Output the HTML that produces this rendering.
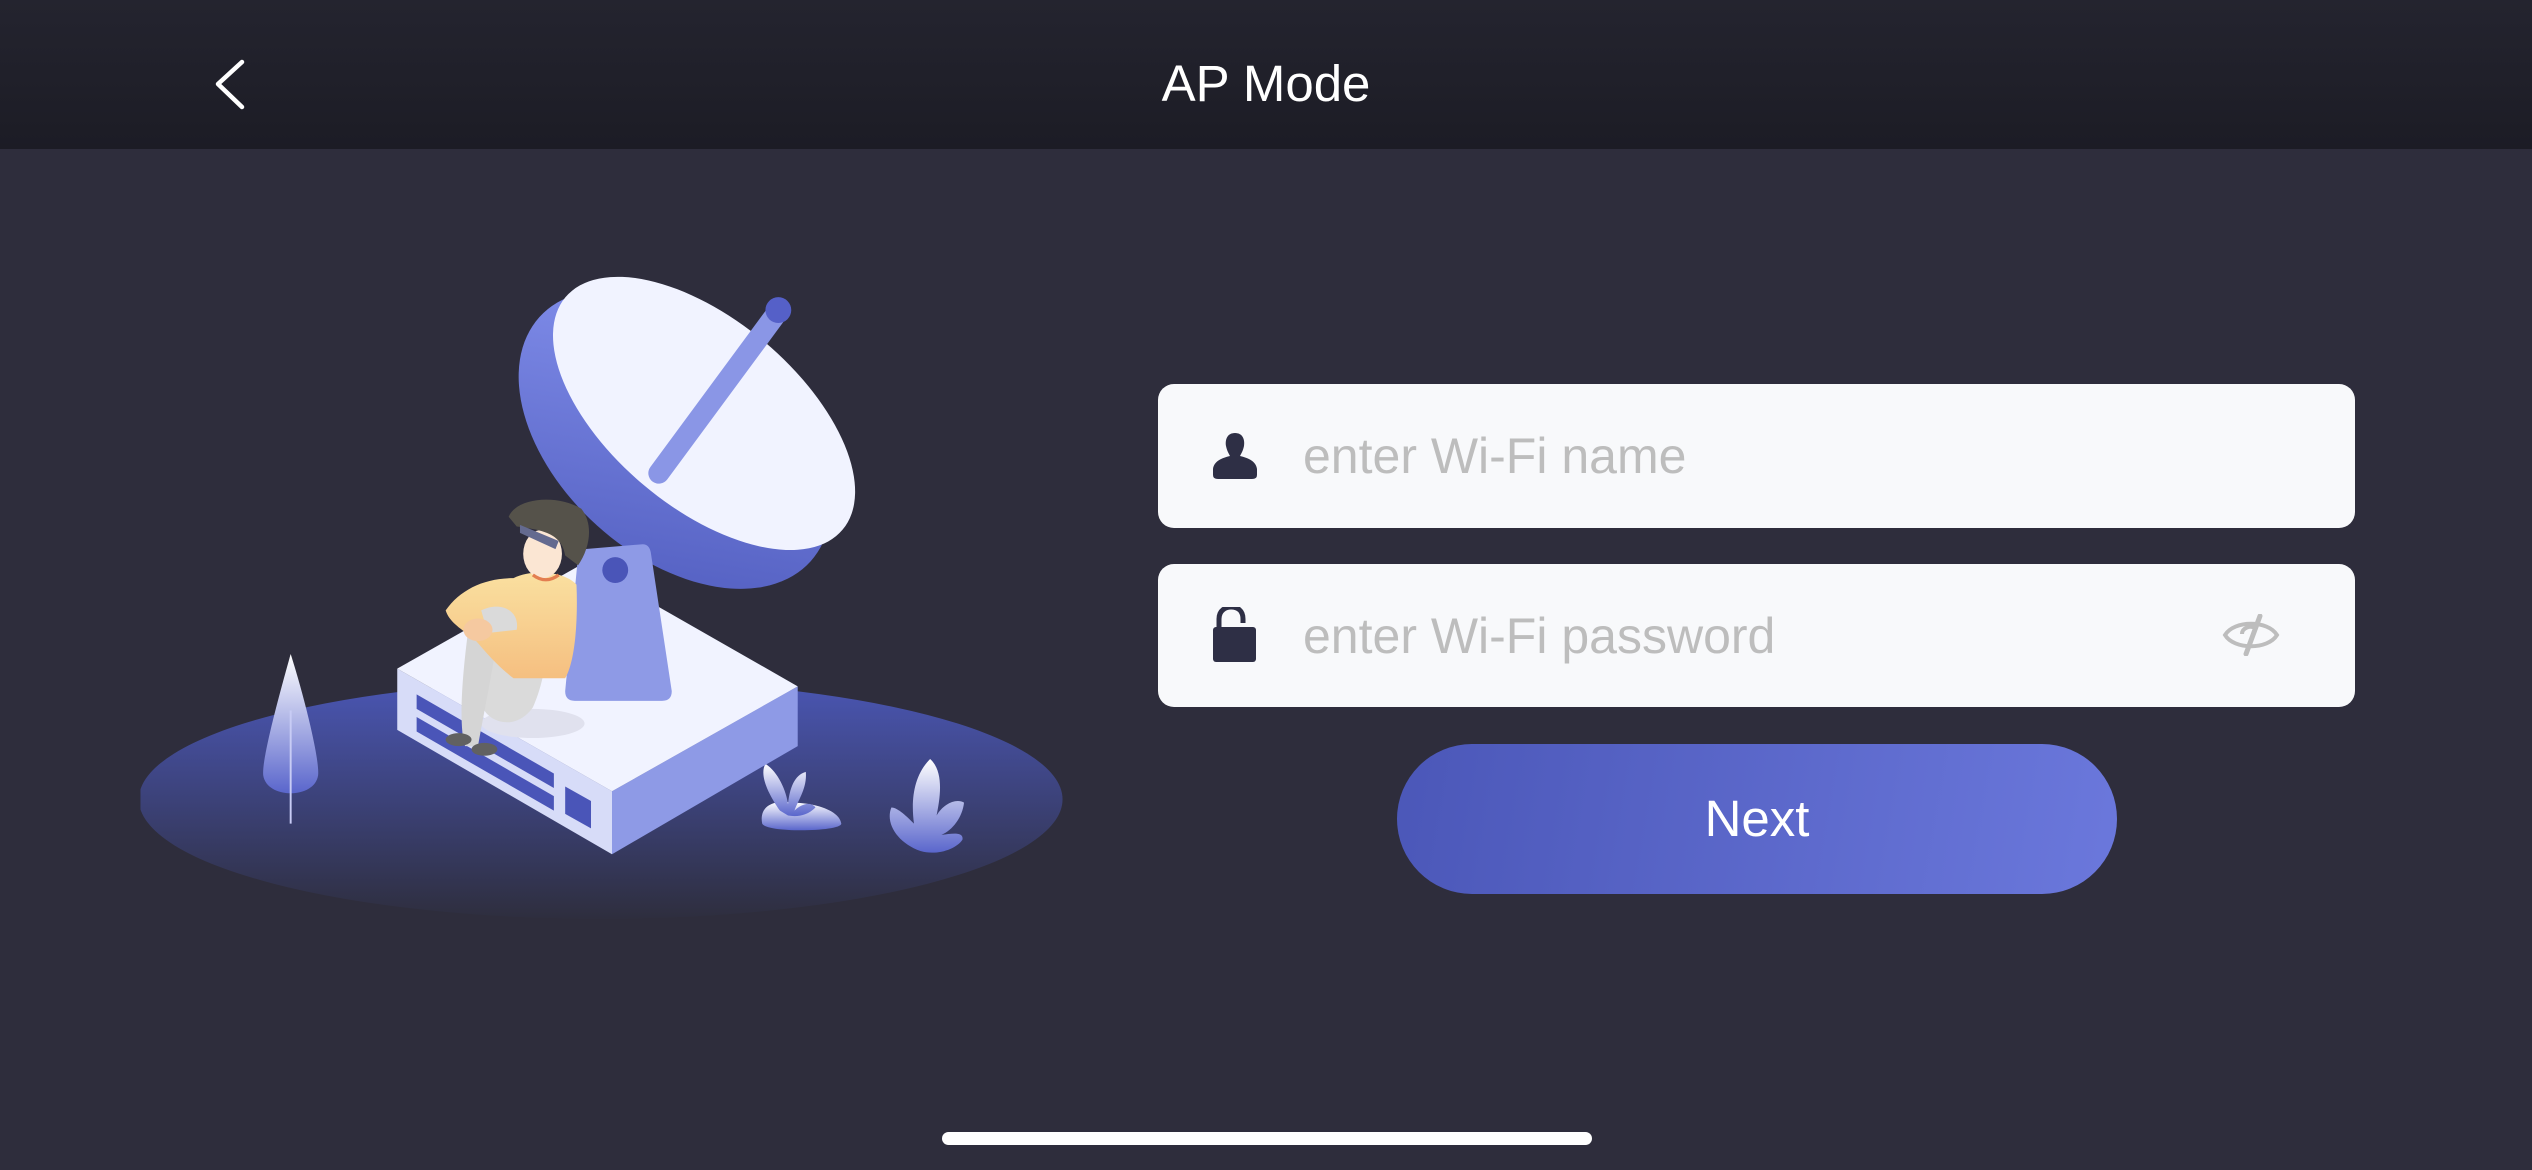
<!DOCTYPE html>
<html><head><meta charset="utf-8"><style>
html,body{margin:0;padding:0}
body{width:2532px;height:1170px;background:#2e2d3c;position:relative;overflow:hidden;font-family:"Liberation Sans",sans-serif}
.hdr{position:absolute;left:0;top:0;width:2532px;height:149px;background:linear-gradient(#24242f,#1c1c25)}
.title{position:absolute;left:0;width:2532px;top:54px;text-align:center;color:#fff;font-size:51px;line-height:60px}
.inp{position:absolute;left:1158px;width:1197px;background:#f8f9fb;border-radius:16px}
.ph{position:absolute;left:145px;color:#bdbdbd;font-size:50px;line-height:56px}
.btn{position:absolute;left:1397px;top:744px;width:720px;height:150px;border-radius:75px;background:linear-gradient(100deg,#4b57b8,#6b78dc);color:#fff;font-size:51px;text-align:center;line-height:150px}
.home{position:absolute;left:942px;top:1132px;width:650px;height:13px;border-radius:7px;background:#fff}
</style></head><body>
<div class="hdr"></div>
<svg style="position:absolute;left:0;top:0" width="2532" height="149"><path d="M242 62 L218 84 L242 107" fill="none" stroke="#fff" stroke-width="4.5" stroke-linecap="round" stroke-linejoin="round"/></svg>
<div class="title">AP Mode</div>

<svg style="position:absolute;left:0;top:0" width="2532" height="1170" viewBox="0 0 1568 724.5">
<defs>
<linearGradient id="g1" x1="0" y1="0" x2="0" y2="1"><stop offset="0" stop-color="#4a56b4"/><stop offset="1" stop-color="#2e2e3e"/></linearGradient>
<linearGradient id="bw" x1="0" y1="0" x2="1" y2="1"><stop offset="0" stop-color="#8794f0"/><stop offset="1" stop-color="#4f5bbd"/></linearGradient>
<linearGradient id="tr" x1="0" y1="0" x2="0" y2="1"><stop offset="0" stop-color="#ffffff"/><stop offset="1" stop-color="#5a66cc"/></linearGradient>
<linearGradient id="sh" x1="0" y1="0" x2="0" y2="1"><stop offset="0" stop-color="#fae0a0"/><stop offset="1" stop-color="#f5bf80"/></linearGradient>
<clipPath id="cp"><rect x="87" y="0" width="700" height="724"/></clipPath>
</defs>
<ellipse cx="372" cy="495" rx="286" ry="74" fill="url(#g1)" clip-path="url(#cp)"/>
<path d="M180 405 C173 430 162 470 163 480 C165 495 195 495 197 480 C198 470 188 430 180 405Z" fill="url(#tr)"/>
<line x1="180" y1="440" x2="180" y2="510" stroke="#c8ccf5" stroke-width="1.2"/>
<path d="M472 510 C470 500 478 495 490 497 C505 497 520 502 521 510 C521 515 475 516 472 510Z" fill="url(#tr)"/>
<path d="M483 502 C476 492 470 480 474 473 C482 478 487 490 488 498 C489 488 492 480 499 478 C500 488 494 496 492 502 C496 498 502 496 505 500 C500 505 494 506 488 505Z" fill="url(#tr)"/>
<path d="M570 527 C556 522 548 510 552 500 C556 500 562 506 566 510 C564 495 566 480 576 470 C585 478 582 495 580 505 C584 498 592 494 597 497 C596 506 590 514 583 517 C590 516 597 515 596 520 C592 526 580 530 570 527Z" fill="url(#tr)"/>
<polygon points="246,414 379,490 379,529 246,452" fill="#d7dcf8"/>
<polygon points="379,490 494,425 494,462 379,529" fill="#8e9ae6"/>
<polygon points="246,414 361,349 494,425 379,490" fill="#f1f3ff"/>
<polygon points="258,430 343,479 343,488 258,439" fill="#4a55b8"/>
<polygon points="258,444 343,493 343,502 258,453" fill="#4a55b8"/>
<polygon points="350,487 366,496 366,513 350,504" fill="#4a55b8"/>
<!-- dish -->
<ellipse cx="418" cy="272" rx="113" ry="72" transform="rotate(42 418 272)" fill="url(#bw)"/>
<ellipse cx="436" cy="256" rx="112" ry="58" transform="rotate(40 436 256)" fill="#f1f3ff"/>
<line x1="408" y1="293" x2="481" y2="194" stroke="#8a96e6" stroke-width="13" stroke-linecap="round"/>
<circle cx="482" cy="192" r="8" fill="#5560c8"/>
<path d="M362 340 L398 337 Q402 337 403 342 L416 428 Q416 434 410 434 L356 434 Q350 434 350 428 L358 344 Q359 340 362 340Z" fill="#8e9ae6"/>
<circle cx="381" cy="353" r="8" fill="#4a55b8"/>
<ellipse cx="330" cy="448" rx="32" ry="9" fill="#e0e1ee"/>
<path d="M338 378 C340 400 338 420 330 438 C320 452 305 448 300 440 L292 400Z" fill="#dadada"/>
<path d="M290 390 C286 420 284 450 288 462 L296 462 C300 440 305 415 308 395Z" fill="#d5d5d5"/>
<path d="M318 358 C330 352 350 354 357 362 C358 385 356 410 350 420 L318 420 C305 410 298 400 293 395 C286 390 278 385 276 378 C285 365 300 358 318 358Z" fill="url(#sh)"/>
<path d="M298 378 C310 372 322 378 320 390 L302 392Z" fill="#dadada"/>
<ellipse cx="296" cy="390" rx="9" ry="7" fill="#f5c9a0"/>
<ellipse cx="336" cy="343" rx="12" ry="15" fill="#fbe6d3"/>
<path d="M315 320 C320 308 345 306 360 315 C368 325 365 340 358 350 L350 344 C348 330 335 328 320 326Z" fill="#55524a"/>
<path d="M322 325 L346 335 L344 340 L322 330Z" fill="#646a8f"/>
<path d="M330 356 Q338 362 346 356" stroke="#e37e50" stroke-width="2" fill="none"/>
<ellipse cx="284" cy="458" rx="8" ry="4" fill="#616161"/>
<ellipse cx="300" cy="464" rx="8" ry="4" fill="#616161"/>
</svg>

<div class="inp" style="top:384px;height:144px">
<svg style="position:absolute;left:54px;top:49px" width="46" height="47" viewBox="0 0 46 47"><path d="M23 0 C31 0 33 7 32 13 C31 18 29 21 28 23 C36 25 44 28 45 36 L45 42 Q45 46 40 46 L6 46 Q1 46 1 42 L1 36 C2 28 10 25 18 23 C17 21 15 18 14 13 C13 7 15 0 23 0Z" fill="#2e2f45"/></svg>
<div class="ph" style="top:44px">enter Wi-Fi name</div>
</div>
<div class="inp" style="top:564px;height:143px">
<svg style="position:absolute;left:55px;top:43px" width="44" height="56" viewBox="0 0 44 56"><path d="M6 20 L6 12 C6 3 13 0 18 0 C24 0 30 3 30 12 L30 16" fill="none" stroke="#2e2f45" stroke-width="5"/><rect x="0" y="20" width="43" height="35" rx="3" fill="#2e2f45"/></svg>
<div class="ph" style="top:44px">enter Wi-Fi password</div>
<svg style="position:absolute;left:1064px;top:50px" width="58" height="42" viewBox="0 0 58 42"><path d="M3 21 C12 6 46 6 55 21 C46 36 12 36 3 21Z" fill="none" stroke="#bdbdbd" stroke-width="4"/><path d="M20 20 C20 14 28 11 33 14" fill="none" stroke="#bdbdbd" stroke-width="4"/><line x1="38" y1="2" x2="24" y2="40" stroke="#bdbdbd" stroke-width="5" stroke-linecap="round"/></svg>
</div>
<div class="btn">Next</div>
<div class="home"></div>
</body></html>
